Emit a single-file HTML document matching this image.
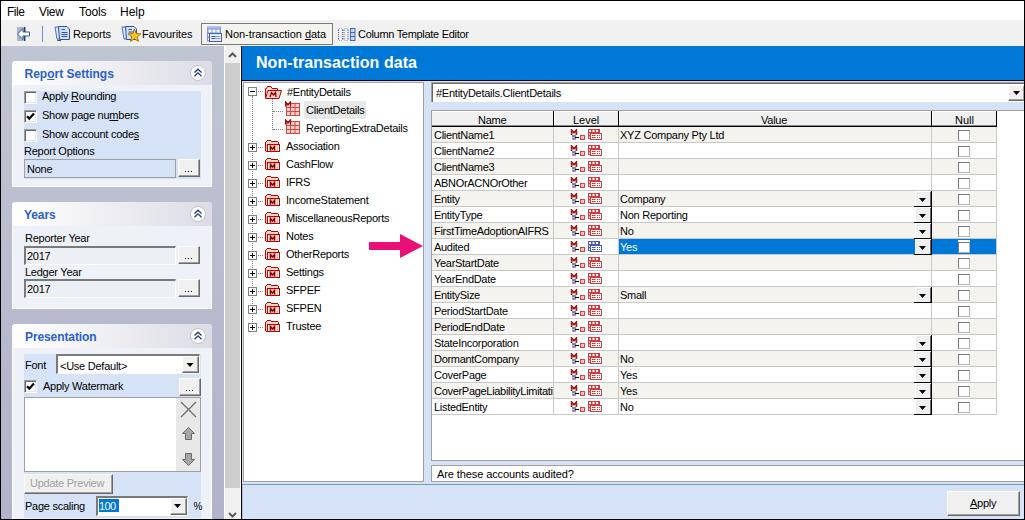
<!DOCTYPE html>
<html><head><meta charset="utf-8">
<style>
*{box-sizing:border-box}
html,body{margin:0;padding:0}
body{width:1025px;height:520px;overflow:hidden;position:relative;background:#000;font-family:"Liberation Sans",sans-serif;font-size:11px;color:#000}
.a{position:absolute}
.t{position:absolute;white-space:pre;line-height:1;letter-spacing:-0.25px}
.u{text-decoration:underline}
.cb{width:13px;height:13px;background:#fff;border-top:1px solid #a0a0a0;border-left:1px solid #a0a0a0;border-right:1px solid #fff;border-bottom:1px solid #fff;box-shadow:inset 1px 1px 0 #696969,inset -1px -1px 0 #e3e3e3}
.btn{background:#f0f0f0;border-top:1px solid #fff;border-left:1px solid #fff;border-right:1px solid #696969;border-bottom:1px solid #696969;box-shadow:inset -1px -1px 0 #a0a0a0}
.dots{position:absolute;width:7px;height:1px;background:linear-gradient(90deg,#000 1px,transparent 1px) 0 0/3px 1px}
.inset{border-top:2px solid #7a7a7a;border-left:2px solid #7a7a7a;border-right:1px solid #fff;border-bottom:1px solid #fff}
</style></head><body>
<!-- window content -->
<div class="a" style="left:1px;top:1px;width:1023px;height:518px;background:#fff"></div>

<!-- MENU -->
<div class="t" style="left:7px;top:6px;font-size:12px;letter-spacing:-0.5px">File</div>
<div class="t" style="left:39px;top:6px;font-size:12px;letter-spacing:-0.3px">View</div>
<div class="t" style="left:79px;top:6px;font-size:12px;letter-spacing:-0.1px">Tools</div>
<div class="t" style="left:120px;top:6px;font-size:12px;letter-spacing:0">Help</div>

<!-- TOOLBAR -->
<div id="toolbar" class="a" style="left:1px;top:20px;width:1023px;height:26px;background:#f0f0f0"></div>


<!-- toolbar items -->
<svg class="a" style="left:16px;top:26px" width="16" height="16">
<rect x="1" y="1" width="7" height="14" fill="#a4b8d4"/>
<rect x="8" y="1" width="1.4" height="14" fill="#1d3a66"/>
<path d="M1.5 8 L7 2.6 V6 H13.5 V10 H7 V13.4 Z" fill="#fff" stroke="#2a4a7a" stroke-width="0.9"/>
</svg>
<div class="a" style="left:42px;top:26px;width:1px;height:16px;background:#6c8fd0"></div>
<svg class="a" style="left:54px;top:25px" width="17" height="17">
<path d="M1 2 H5 L6 14 H3 Z" fill="#d8e8fa" stroke="#4a6fc0" stroke-width="1"/>
<path d="M4.5 1.5 H13 L15.5 4 V14.5 H5.5 Z" fill="#cfe3fa" stroke="#34509a" stroke-width="1"/>
<path d="M7.5 4.5 H11 M7.5 7.5 H13.5 M7.5 9.5 H13.5 M7.5 11.5 H13.5" stroke="#3a4f9a" stroke-width="1"/>
<path d="M3.5 14.5 V15.5 H7" stroke="#34509a" fill="none"/>
</svg>
<div class="t" style="left:73px;top:29px;letter-spacing:-0.1px">Reports</div>
<svg class="a" style="left:121px;top:25px" width="20" height="18">
<path d="M1 2 H5 L6 14 H3 Z" fill="#d8e8fa" stroke="#4a6fc0" stroke-width="1"/>
<path d="M4.5 1.5 H13 L15.5 4 V14.5 H5.5 Z" fill="#cfe3fa" stroke="#34509a" stroke-width="1"/>
<path d="M7.5 4.5 H11 M7.5 7 H13" stroke="#3a4f9a" stroke-width="1"/>
<path d="M13.50 4.10 L15.20 8.55 L19.97 8.80 L16.26 11.80 L17.50 16.40 L13.50 13.80 L9.50 16.40 L10.74 11.80 L7.03 8.80 L11.80 8.55 Z" fill="#f7c623" stroke="#a06a0a" stroke-width="0.9"/>
</svg>
<div class="t" style="left:142px;top:29px;letter-spacing:-0.1px">Favourites</div>
<div class="a" style="left:201px;top:23px;width:132px;height:22px;background:#f5f3ee;border:1px solid #7a7a7a"></div>
<svg class="a" style="left:207px;top:26px" width="16" height="17">
<rect x="0" y="0.5" width="14" height="15" fill="#7f97dc"/>
<rect x="0.5" y="1" width="13" height="1.5" fill="#a9b9ea"/>
<rect x="1.5" y="3.5" width="3" height="3" fill="#f4f6ff"/><rect x="5.5" y="3.5" width="3" height="3" fill="#f4f6ff"/><rect x="9.5" y="3.5" width="3" height="3" fill="#f4f6ff"/>
<rect x="1" y="8" width="1.5" height="2.5" fill="#f4f6ff"/><rect x="1" y="12" width="1.5" height="2" fill="#f4f6ff"/>
<rect x="2.5" y="7.5" width="12" height="8" fill="#d9effc" stroke="#5a58a8" stroke-width="1"/>
<path d="M4.5 10.5 H8.5 M4.5 12.5 H8.5" stroke="#4a4a96" stroke-width="1"/>
<rect x="9.5" y="10" width="1" height="1" fill="#4a4a96"/><rect x="11.5" y="10" width="1" height="1" fill="#4a4a96"/>
<rect x="9.5" y="12" width="1" height="1" fill="#4a4a96"/><rect x="11.5" y="12" width="1" height="1" fill="#4a4a96"/>
</svg>
<div class="t" style="left:225px;top:29px;letter-spacing:-0.05px">Non-transaction <span class="u">d</span>ata</div>
<svg class="a" style="left:337px;top:27px" width="19" height="15"><rect x="1" y="3" width="1" height="1" fill="#5060a0"/><rect x="5" y="3" width="1" height="1" fill="#5060a0"/><rect x="1" y="5" width="1" height="1" fill="#5060a0"/><rect x="5" y="5" width="1" height="1" fill="#5060a0"/><rect x="1" y="7" width="1" height="1" fill="#5060a0"/><rect x="5" y="7" width="1" height="1" fill="#5060a0"/><rect x="1" y="9" width="1" height="1" fill="#5060a0"/><rect x="5" y="9" width="1" height="1" fill="#5060a0"/><rect x="1" y="11" width="1" height="1" fill="#5060a0"/><rect x="5" y="11" width="1" height="1" fill="#5060a0"/><path d="M1.5 2.5 L2.5 1.5 M5.5 2.5 L4.5 1.5 M1.5 12.5 L2.5 13.5 M5.5 12.5 L4.5 13.5" stroke="#5060a0" stroke-width="1"/><rect x="6.5" y="3" width="1" height="1" fill="#5060a0"/><rect x="10.5" y="3" width="1" height="1" fill="#5060a0"/><rect x="6.5" y="5" width="1" height="1" fill="#5060a0"/><rect x="10.5" y="5" width="1" height="1" fill="#5060a0"/><rect x="6.5" y="7" width="1" height="1" fill="#5060a0"/><rect x="10.5" y="7" width="1" height="1" fill="#5060a0"/><rect x="6.5" y="9" width="1" height="1" fill="#5060a0"/><rect x="10.5" y="9" width="1" height="1" fill="#5060a0"/><rect x="6.5" y="11" width="1" height="1" fill="#5060a0"/><rect x="10.5" y="11" width="1" height="1" fill="#5060a0"/><path d="M7.0 2.5 L8.0 1.5 M11.0 2.5 L10.0 1.5 M7.0 12.5 L8.0 13.5 M11.0 12.5 L10.0 13.5" stroke="#5060a0" stroke-width="1"/><rect x="13" y="1" width="5.5" height="13" fill="#4466c0"/><rect x="14" y="2" width="3.5" height="3" fill="#c8d8f6"/><rect x="14" y="6" width="3.5" height="3" fill="#c8d8f6"/><rect x="14" y="10" width="3.5" height="3" fill="#c8d8f6"/></svg>
<div class="t" style="left:358px;top:29px;letter-spacing:-0.3px">Column Template Editor</div>

<!-- LEFT PANEL -->
<div id="leftbg" class="a" style="left:1px;top:46px;width:223px;height:473px;background:linear-gradient(#c0c5d3,#b1b3ca)"></div>


<!-- PANEL: Report Settings -->
<div class="a" style="left:12px;top:61px;width:200px;height:126px;background:#eef1f7;border-left:1px solid #fff;border-right:1px solid #fff;border-bottom:1px solid #fff;border-radius:4px 4px 0 0"></div>
<div class="a" style="left:12px;top:61px;width:200px;height:24px;background:linear-gradient(90deg,#fff 0%,#f3f3f6 35%,#dcdce6 100%);border-radius:4px 4px 0 0"></div>
<div class="t" style="left:24.5px;top:68px;font-size:12px;font-weight:bold;color:#2b5fcb;letter-spacing:0">Rep<span class="u">o</span>rt Settings</div>
<div class="a" style="left:190px;top:64.5px;width:16px;height:16px;border-radius:50%;background:radial-gradient(circle at 50% 40%,#fff 60%,#f2f2f6);border:1px solid #c2c4d0"></div>
<svg class="a" style="left:190px;top:64.5px" width="16" height="16"><path d="M4.5 7.5 L8 4.2 L11.5 7.5 M4.5 11.2 L8 7.9 L11.5 11.2" stroke="#1f3a78" stroke-width="1.3" fill="none"/></svg>
<div class="a" style="left:24px;top:91px;width:177px;height:88px;background:#d6e3f6"></div>
<div class="a cb" style="left:24px;top:91px"></div>
<div class="t" style="left:42px;top:91px">Apply <span class="u">R</span>ounding</div>
<div class="a cb" style="left:24px;top:110px"></div><svg class="a" style="left:24px;top:110px" width="13" height="13"><path d="M3 6.2 L5.3 8.6 L10 3.6" stroke="#000" stroke-width="2.2" fill="none"/></svg>
<div class="t" style="left:42px;top:110px">Show page nu<span class="u">m</span>bers</div>
<div class="a cb" style="left:24px;top:129px"></div>
<div class="t" style="left:42px;top:129px">Show account code<span class="u">s</span></div>
<div class="t" style="left:24px;top:146px">Report Options</div>
<div class="a" style="left:24px;top:159px;width:152px;height:19px;border:1px solid #a0a0a0;background:#d6e3f6"></div>
<div class="t" style="left:27px;top:164px">None</div>
<div class="a btn" style="left:178px;top:159px;width:22px;height:18px"></div>
<div class="dots" style="left:185px;top:171px"></div>

<!-- PANEL: Years -->
<div class="a" style="left:12px;top:202px;width:200px;height:107px;background:#eef1f7;border-left:1px solid #fff;border-right:1px solid #fff;border-bottom:1px solid #fff;border-radius:4px 4px 0 0"></div>
<div class="a" style="left:12px;top:202px;width:200px;height:24px;background:linear-gradient(90deg,#fff 0%,#f3f3f6 35%,#dcdce6 100%);border-radius:4px 4px 0 0"></div>
<div class="t" style="left:24px;top:209px;font-size:12px;font-weight:bold;color:#2b5fcb;letter-spacing:-0.1px">Years</div>
<div class="a" style="left:190px;top:205.5px;width:16px;height:16px;border-radius:50%;background:radial-gradient(circle at 50% 40%,#fff 60%,#f2f2f6);border:1px solid #c2c4d0"></div>
<svg class="a" style="left:190px;top:205.5px" width="16" height="16"><path d="M4.5 7.5 L8 4.2 L11.5 7.5 M4.5 11.2 L8 7.9 L11.5 11.2" stroke="#1f3a78" stroke-width="1.3" fill="none"/></svg>
<div class="t" style="left:25px;top:233px">Reporter Year</div>
<div class="a inset" style="left:24px;top:246px;width:152px;height:19px;background:#eceff4"></div>
<div class="t" style="left:27px;top:251px">2017</div>
<div class="a btn" style="left:178px;top:246px;width:22px;height:18px"></div>
<div class="dots" style="left:185px;top:258px"></div>
<div class="t" style="left:25px;top:267px">Ledger Year</div>
<div class="a inset" style="left:24px;top:279px;width:152px;height:19px;background:#eceff4"></div>
<div class="t" style="left:27px;top:284px">2017</div>
<div class="a btn" style="left:178px;top:279px;width:22px;height:18px"></div>
<div class="dots" style="left:185px;top:291px"></div>

<!-- PANEL: Presentation -->
<div class="a" style="left:12px;top:324px;width:200px;height:195px;background:#eef1f7;border-left:1px solid #fff;border-right:1px solid #fff;border-radius:4px 4px 0 0"></div>
<div class="a" style="left:12px;top:324px;width:200px;height:24px;background:linear-gradient(90deg,#fff 0%,#f3f3f6 35%,#dcdce6 100%);border-radius:4px 4px 0 0"></div>
<div class="t" style="left:25px;top:331px;font-size:12px;font-weight:bold;color:#2b5fcb;letter-spacing:-0.1px">Presentation</div>
<div class="a" style="left:190px;top:327.5px;width:16px;height:16px;border-radius:50%;background:radial-gradient(circle at 50% 40%,#fff 60%,#f2f2f6);border:1px solid #c2c4d0"></div>
<svg class="a" style="left:190px;top:327.5px" width="16" height="16"><path d="M4.5 7.5 L8 4.2 L11.5 7.5 M4.5 11.2 L8 7.9 L11.5 11.2" stroke="#1f3a78" stroke-width="1.3" fill="none"/></svg>
<div class="a" style="left:24px;top:354px;width:177px;height:164px;background:#d6e3f6"></div>
<div class="t" style="left:25px;top:360px">Font</div>
<div class="a inset" style="left:56px;top:354px;width:144px;height:20px;background:#fff"></div>
<div class="t" style="left:60px;top:361px">&lt;Use Default&gt;</div>
<div class="a btn" style="left:182px;top:356px;width:17px;height:17px"></div>
<svg class="a" style="left:182px;top:357px" width="16" height="16"><path d="M4.5 6 H11.5 L8 10 Z" fill="#000"/></svg>
<div class="a cb" style="left:24px;top:380px"></div><svg class="a" style="left:24px;top:380px" width="13" height="13"><path d="M3 6.2 L5.3 8.6 L10 3.6" stroke="#000" stroke-width="2.2" fill="none"/></svg>
<div class="t" style="left:43px;top:381px">Apply Watermark</div>
<div class="a btn" style="left:179px;top:378px;width:22px;height:18px"></div>
<div class="dots" style="left:186px;top:390px"></div>
<div class="a" style="left:24px;top:397px;width:177px;height:75px;background:#fff;border-top:1px solid #a0a0a0;border-left:1px solid #a0a0a0;border-bottom:1px solid #a0a0a0;border-right:1px solid #a0a0a0"></div>
<div class="a" style="left:176px;top:398px;width:24px;height:73px;background:#e8e8e8"></div>
<svg class="a" style="left:176px;top:398px" width="24" height="73">
<path d="M5 4 L20 19 M20 4 L5 19" stroke="#6e6e6e" stroke-width="1.3" fill="none"/>
<path d="M12.5 29.5 L18.5 35.5 H15.5 V41.5 H9.5 V35.5 H6.5 Z" fill="#a8a8a8" stroke="#6a6a6a" stroke-width="1"/>
<path d="M12.5 67.5 L18.5 61.5 H15.5 V55.5 H9.5 V61.5 H6.5 Z" fill="#a8a8a8" stroke="#6a6a6a" stroke-width="1"/>
</svg>
<div class="a btn" style="left:24px;top:474px;width:89px;height:20px"></div>
<div class="t" style="left:30px;top:478px;color:#a0a0a0">Update Preview</div>
<div class="t" style="left:25px;top:501px">Page scaling</div>
<div class="a inset" style="left:96px;top:496px;width:92px;height:20px;background:#fff"></div>
<div class="a" style="left:99px;top:499px;width:20px;height:13px;background:#0078d7"></div>
<div class="t" style="left:99px;top:501px;color:#fff;letter-spacing:-0.6px">100</div>
<div class="a btn" style="left:170px;top:498px;width:17px;height:17px"></div>
<svg class="a" style="left:170px;top:498px" width="16" height="16"><path d="M4 6 H11 L7.5 10 Z" fill="#000"/></svg>
<div class="t" style="left:193.5px;top:502px;font-size:10px;letter-spacing:-0.5px">%</div>

<!-- SCROLLBAR -->
<div class="a" style="left:224px;top:46px;width:17px;height:473px;background:#f0f0f0"></div>
<div class="a" style="left:225px;top:63px;width:15px;height:425px;background:#cdcdcd"></div>
<div class="a" style="left:224px;top:46px;width:1px;height:473px;background:#fff"></div><div class="a" style="left:240px;top:46px;width:1px;height:473px;background:#fff"></div>
<div class="a" style="left:241px;top:46px;width:1px;height:473px;background:#000"></div>


<svg class="a" style="left:225px;top:46px" width="15" height="17"><path d="M4 11 L7.5 7.5 L11 11" stroke="#5a5a5a" stroke-width="2" fill="none"/></svg>
<svg class="a" style="left:225px;top:504px" width="15" height="15"><path d="M4 9 L7.5 12.5 L11 9" stroke="#5a5a5a" stroke-width="2" fill="none"/></svg>

<!-- RIGHT AREA -->
<div id="right" class="a" style="left:242px;top:46px;width:782px;height:473px;background:#d6e3f6"></div>
<div id="hdr" class="a" style="left:242px;top:46px;width:782px;height:34px;background:#0078d7"></div>
<div class="a" style="left:242px;top:80px;width:782px;height:1px;background:#000"></div>
<div class="t" style="left:256px;top:55px;font-size:16px;font-weight:bold;color:#fff;letter-spacing:0.05px">Non-transaction data</div>

<!-- tree box -->
<div id="tree" class="a" style="left:243px;top:82px;width:181px;height:400px;background:#fff;border:1px solid #a0a0a0"></div>

<!-- TREE -->
<div class="a" style="left:252px;top:96px;width:1px;height:228px;border-left:1px dotted #808080"></div>
<div class="a" style="left:272px;top:99px;width:1px;height:31px;border-left:1px dotted #808080"></div>
<div class="a" style="left:273px;top:111px;width:10px;height:1px;border-top:1px dotted #808080"></div>
<div class="a" style="left:273px;top:129px;width:10px;height:1px;border-top:1px dotted #808080"></div>
<div class="a" style="left:248px;top:87px;width:9px;height:9px;border:1px solid #808080;background:#fff"></div>
<div class="a" style="left:250px;top:91px;width:5px;height:1px;background:#000"></div>
<div class="a" style="left:258px;top:91px;width:5px;height:1px;border-top:1px dotted #808080"></div>
<svg class="a" style="left:265px;top:86px" width="17" height="13"><path d="M0.5 11.5 V2.5 H1.5 L2.5 0.5 H6 L7 2.5 H12.5 V4.5" fill="#fcdcd4" stroke="#c40000" stroke-width="1"/><path d="M0.5 12.5 L3 4.5 H16.5 L14 12.5 Z" fill="#f7cfc6" stroke="#c40000" stroke-width="1"/><path d="M5 11 L6.5 6.5 L8.5 9 L10.5 6.5 L11 11" stroke="#8a0000" fill="none" stroke-width="1.3"/></svg>
<div class="t" style="left:287px;top:87px">#EntityDetails</div>
<div class="a" style="left:304px;top:101px;width:62px;height:18px;background:#e8e8e8"></div>
<svg class="a" style="left:285px;top:101px" width="15" height="15"><rect x="1.5" y="2.5" width="13" height="12" fill="#f7d0c8" stroke="#d04848" stroke-width="1"/><path d="M1.5 6.5 H14.5 M1.5 10.5 H14.5 M5.5 2.5 V14.5 M10 2.5 V14.5" stroke="#d04848" stroke-width="1"/><path d="M0.5 5.5 V0.8 L3 4 L5.5 0.8 V5.5" stroke="#9a1010" stroke-width="1.3" fill="none"/></svg>
<div class="t" style="left:306px;top:105px">ClientDetails</div>
<svg class="a" style="left:285px;top:119px" width="15" height="15"><rect x="1.5" y="2.5" width="13" height="12" fill="#f7d0c8" stroke="#d04848" stroke-width="1"/><path d="M1.5 6.5 H14.5 M1.5 10.5 H14.5 M5.5 2.5 V14.5 M10 2.5 V14.5" stroke="#d04848" stroke-width="1"/><path d="M0.5 5.5 V0.8 L3 4 L5.5 0.8 V5.5" stroke="#9a1010" stroke-width="1.3" fill="none"/></svg>
<div class="t" style="left:306px;top:123px">ReportingExtraDetails</div>
<div class="a" style="left:248px;top:143px;width:9px;height:9px;border:1px solid #808080;background:#fff"></div>
<div class="a" style="left:250px;top:147px;width:5px;height:1px;background:#000"></div>
<div class="a" style="left:252px;top:145px;width:1px;height:5px;background:#000"></div>
<div class="a" style="left:258px;top:147px;width:5px;height:1px;border-top:1px dotted #808080"></div>
<svg class="a" style="left:265px;top:140px" width="15" height="12" shape-rendering="crispEdges"><rect x="1" y="2" width="12" height="2" fill="#fbd3c4"/><rect x="2" y="1" width="4" height="1" fill="#fbe3da"/><rect x="1" y="4" width="1" height="7" fill="#fbd3c4"/><rect x="2" y="0" width="4" height="1" fill="#c00000"/><rect x="1" y="1" width="1" height="1" fill="#c00000"/><rect x="6" y="1" width="7" height="1" fill="#c00000"/><rect x="13" y="2" width="1" height="2" fill="#c00000"/><rect x="0" y="2" width="1" height="9" fill="#c00000"/><rect x="3" y="5" width="11" height="6" fill="#f3b8ac"/><rect x="3" y="5" width="1" height="6" fill="#fff"/><rect x="11" y="5" width="1" height="6" fill="#fde8e2"/><rect x="13" y="5" width="1" height="6" fill="#fff"/><rect x="1" y="11" width="14" height="1" fill="#c00000"/><rect x="2" y="4" width="13" height="1" fill="#c00000"/><rect x="2" y="4" width="1" height="8" fill="#c00000"/><rect x="14" y="4" width="1" height="8" fill="#c00000"/><path d="M5.5 10.5 V6.5 L7.5 9 L9.5 6.5 V10.5" stroke="#7a0000" stroke-width="1.3" fill="none" shape-rendering="auto"/></svg>
<div class="t" style="left:286px;top:141px">Association</div>
<div class="a" style="left:248px;top:161px;width:9px;height:9px;border:1px solid #808080;background:#fff"></div>
<div class="a" style="left:250px;top:165px;width:5px;height:1px;background:#000"></div>
<div class="a" style="left:252px;top:163px;width:1px;height:5px;background:#000"></div>
<div class="a" style="left:258px;top:165px;width:5px;height:1px;border-top:1px dotted #808080"></div>
<svg class="a" style="left:265px;top:158px" width="15" height="12" shape-rendering="crispEdges"><rect x="1" y="2" width="12" height="2" fill="#fbd3c4"/><rect x="2" y="1" width="4" height="1" fill="#fbe3da"/><rect x="1" y="4" width="1" height="7" fill="#fbd3c4"/><rect x="2" y="0" width="4" height="1" fill="#c00000"/><rect x="1" y="1" width="1" height="1" fill="#c00000"/><rect x="6" y="1" width="7" height="1" fill="#c00000"/><rect x="13" y="2" width="1" height="2" fill="#c00000"/><rect x="0" y="2" width="1" height="9" fill="#c00000"/><rect x="3" y="5" width="11" height="6" fill="#f3b8ac"/><rect x="3" y="5" width="1" height="6" fill="#fff"/><rect x="11" y="5" width="1" height="6" fill="#fde8e2"/><rect x="13" y="5" width="1" height="6" fill="#fff"/><rect x="1" y="11" width="14" height="1" fill="#c00000"/><rect x="2" y="4" width="13" height="1" fill="#c00000"/><rect x="2" y="4" width="1" height="8" fill="#c00000"/><rect x="14" y="4" width="1" height="8" fill="#c00000"/><path d="M5.5 10.5 V6.5 L7.5 9 L9.5 6.5 V10.5" stroke="#7a0000" stroke-width="1.3" fill="none" shape-rendering="auto"/></svg>
<div class="t" style="left:286px;top:159px">CashFlow</div>
<div class="a" style="left:248px;top:179px;width:9px;height:9px;border:1px solid #808080;background:#fff"></div>
<div class="a" style="left:250px;top:183px;width:5px;height:1px;background:#000"></div>
<div class="a" style="left:252px;top:181px;width:1px;height:5px;background:#000"></div>
<div class="a" style="left:258px;top:183px;width:5px;height:1px;border-top:1px dotted #808080"></div>
<svg class="a" style="left:265px;top:176px" width="15" height="12" shape-rendering="crispEdges"><rect x="1" y="2" width="12" height="2" fill="#fbd3c4"/><rect x="2" y="1" width="4" height="1" fill="#fbe3da"/><rect x="1" y="4" width="1" height="7" fill="#fbd3c4"/><rect x="2" y="0" width="4" height="1" fill="#c00000"/><rect x="1" y="1" width="1" height="1" fill="#c00000"/><rect x="6" y="1" width="7" height="1" fill="#c00000"/><rect x="13" y="2" width="1" height="2" fill="#c00000"/><rect x="0" y="2" width="1" height="9" fill="#c00000"/><rect x="3" y="5" width="11" height="6" fill="#f3b8ac"/><rect x="3" y="5" width="1" height="6" fill="#fff"/><rect x="11" y="5" width="1" height="6" fill="#fde8e2"/><rect x="13" y="5" width="1" height="6" fill="#fff"/><rect x="1" y="11" width="14" height="1" fill="#c00000"/><rect x="2" y="4" width="13" height="1" fill="#c00000"/><rect x="2" y="4" width="1" height="8" fill="#c00000"/><rect x="14" y="4" width="1" height="8" fill="#c00000"/><path d="M5.5 10.5 V6.5 L7.5 9 L9.5 6.5 V10.5" stroke="#7a0000" stroke-width="1.3" fill="none" shape-rendering="auto"/></svg>
<div class="t" style="left:286px;top:177px">IFRS</div>
<div class="a" style="left:248px;top:197px;width:9px;height:9px;border:1px solid #808080;background:#fff"></div>
<div class="a" style="left:250px;top:201px;width:5px;height:1px;background:#000"></div>
<div class="a" style="left:252px;top:199px;width:1px;height:5px;background:#000"></div>
<div class="a" style="left:258px;top:201px;width:5px;height:1px;border-top:1px dotted #808080"></div>
<svg class="a" style="left:265px;top:194px" width="15" height="12" shape-rendering="crispEdges"><rect x="1" y="2" width="12" height="2" fill="#fbd3c4"/><rect x="2" y="1" width="4" height="1" fill="#fbe3da"/><rect x="1" y="4" width="1" height="7" fill="#fbd3c4"/><rect x="2" y="0" width="4" height="1" fill="#c00000"/><rect x="1" y="1" width="1" height="1" fill="#c00000"/><rect x="6" y="1" width="7" height="1" fill="#c00000"/><rect x="13" y="2" width="1" height="2" fill="#c00000"/><rect x="0" y="2" width="1" height="9" fill="#c00000"/><rect x="3" y="5" width="11" height="6" fill="#f3b8ac"/><rect x="3" y="5" width="1" height="6" fill="#fff"/><rect x="11" y="5" width="1" height="6" fill="#fde8e2"/><rect x="13" y="5" width="1" height="6" fill="#fff"/><rect x="1" y="11" width="14" height="1" fill="#c00000"/><rect x="2" y="4" width="13" height="1" fill="#c00000"/><rect x="2" y="4" width="1" height="8" fill="#c00000"/><rect x="14" y="4" width="1" height="8" fill="#c00000"/><path d="M5.5 10.5 V6.5 L7.5 9 L9.5 6.5 V10.5" stroke="#7a0000" stroke-width="1.3" fill="none" shape-rendering="auto"/></svg>
<div class="t" style="left:286px;top:195px">IncomeStatement</div>
<div class="a" style="left:248px;top:215px;width:9px;height:9px;border:1px solid #808080;background:#fff"></div>
<div class="a" style="left:250px;top:219px;width:5px;height:1px;background:#000"></div>
<div class="a" style="left:252px;top:217px;width:1px;height:5px;background:#000"></div>
<div class="a" style="left:258px;top:219px;width:5px;height:1px;border-top:1px dotted #808080"></div>
<svg class="a" style="left:265px;top:212px" width="15" height="12" shape-rendering="crispEdges"><rect x="1" y="2" width="12" height="2" fill="#fbd3c4"/><rect x="2" y="1" width="4" height="1" fill="#fbe3da"/><rect x="1" y="4" width="1" height="7" fill="#fbd3c4"/><rect x="2" y="0" width="4" height="1" fill="#c00000"/><rect x="1" y="1" width="1" height="1" fill="#c00000"/><rect x="6" y="1" width="7" height="1" fill="#c00000"/><rect x="13" y="2" width="1" height="2" fill="#c00000"/><rect x="0" y="2" width="1" height="9" fill="#c00000"/><rect x="3" y="5" width="11" height="6" fill="#f3b8ac"/><rect x="3" y="5" width="1" height="6" fill="#fff"/><rect x="11" y="5" width="1" height="6" fill="#fde8e2"/><rect x="13" y="5" width="1" height="6" fill="#fff"/><rect x="1" y="11" width="14" height="1" fill="#c00000"/><rect x="2" y="4" width="13" height="1" fill="#c00000"/><rect x="2" y="4" width="1" height="8" fill="#c00000"/><rect x="14" y="4" width="1" height="8" fill="#c00000"/><path d="M5.5 10.5 V6.5 L7.5 9 L9.5 6.5 V10.5" stroke="#7a0000" stroke-width="1.3" fill="none" shape-rendering="auto"/></svg>
<div class="t" style="left:286px;top:213px">MiscellaneousReports</div>
<div class="a" style="left:248px;top:233px;width:9px;height:9px;border:1px solid #808080;background:#fff"></div>
<div class="a" style="left:250px;top:237px;width:5px;height:1px;background:#000"></div>
<div class="a" style="left:252px;top:235px;width:1px;height:5px;background:#000"></div>
<div class="a" style="left:258px;top:237px;width:5px;height:1px;border-top:1px dotted #808080"></div>
<svg class="a" style="left:265px;top:230px" width="15" height="12" shape-rendering="crispEdges"><rect x="1" y="2" width="12" height="2" fill="#fbd3c4"/><rect x="2" y="1" width="4" height="1" fill="#fbe3da"/><rect x="1" y="4" width="1" height="7" fill="#fbd3c4"/><rect x="2" y="0" width="4" height="1" fill="#c00000"/><rect x="1" y="1" width="1" height="1" fill="#c00000"/><rect x="6" y="1" width="7" height="1" fill="#c00000"/><rect x="13" y="2" width="1" height="2" fill="#c00000"/><rect x="0" y="2" width="1" height="9" fill="#c00000"/><rect x="3" y="5" width="11" height="6" fill="#f3b8ac"/><rect x="3" y="5" width="1" height="6" fill="#fff"/><rect x="11" y="5" width="1" height="6" fill="#fde8e2"/><rect x="13" y="5" width="1" height="6" fill="#fff"/><rect x="1" y="11" width="14" height="1" fill="#c00000"/><rect x="2" y="4" width="13" height="1" fill="#c00000"/><rect x="2" y="4" width="1" height="8" fill="#c00000"/><rect x="14" y="4" width="1" height="8" fill="#c00000"/><path d="M5.5 10.5 V6.5 L7.5 9 L9.5 6.5 V10.5" stroke="#7a0000" stroke-width="1.3" fill="none" shape-rendering="auto"/></svg>
<div class="t" style="left:286px;top:231px">Notes</div>
<div class="a" style="left:248px;top:251px;width:9px;height:9px;border:1px solid #808080;background:#fff"></div>
<div class="a" style="left:250px;top:255px;width:5px;height:1px;background:#000"></div>
<div class="a" style="left:252px;top:253px;width:1px;height:5px;background:#000"></div>
<div class="a" style="left:258px;top:255px;width:5px;height:1px;border-top:1px dotted #808080"></div>
<svg class="a" style="left:265px;top:248px" width="15" height="12" shape-rendering="crispEdges"><rect x="1" y="2" width="12" height="2" fill="#fbd3c4"/><rect x="2" y="1" width="4" height="1" fill="#fbe3da"/><rect x="1" y="4" width="1" height="7" fill="#fbd3c4"/><rect x="2" y="0" width="4" height="1" fill="#c00000"/><rect x="1" y="1" width="1" height="1" fill="#c00000"/><rect x="6" y="1" width="7" height="1" fill="#c00000"/><rect x="13" y="2" width="1" height="2" fill="#c00000"/><rect x="0" y="2" width="1" height="9" fill="#c00000"/><rect x="3" y="5" width="11" height="6" fill="#f3b8ac"/><rect x="3" y="5" width="1" height="6" fill="#fff"/><rect x="11" y="5" width="1" height="6" fill="#fde8e2"/><rect x="13" y="5" width="1" height="6" fill="#fff"/><rect x="1" y="11" width="14" height="1" fill="#c00000"/><rect x="2" y="4" width="13" height="1" fill="#c00000"/><rect x="2" y="4" width="1" height="8" fill="#c00000"/><rect x="14" y="4" width="1" height="8" fill="#c00000"/><path d="M5.5 10.5 V6.5 L7.5 9 L9.5 6.5 V10.5" stroke="#7a0000" stroke-width="1.3" fill="none" shape-rendering="auto"/></svg>
<div class="t" style="left:286px;top:249px">OtherReports</div>
<div class="a" style="left:248px;top:269px;width:9px;height:9px;border:1px solid #808080;background:#fff"></div>
<div class="a" style="left:250px;top:273px;width:5px;height:1px;background:#000"></div>
<div class="a" style="left:252px;top:271px;width:1px;height:5px;background:#000"></div>
<div class="a" style="left:258px;top:273px;width:5px;height:1px;border-top:1px dotted #808080"></div>
<svg class="a" style="left:265px;top:266px" width="15" height="12" shape-rendering="crispEdges"><rect x="1" y="2" width="12" height="2" fill="#fbd3c4"/><rect x="2" y="1" width="4" height="1" fill="#fbe3da"/><rect x="1" y="4" width="1" height="7" fill="#fbd3c4"/><rect x="2" y="0" width="4" height="1" fill="#c00000"/><rect x="1" y="1" width="1" height="1" fill="#c00000"/><rect x="6" y="1" width="7" height="1" fill="#c00000"/><rect x="13" y="2" width="1" height="2" fill="#c00000"/><rect x="0" y="2" width="1" height="9" fill="#c00000"/><rect x="3" y="5" width="11" height="6" fill="#f3b8ac"/><rect x="3" y="5" width="1" height="6" fill="#fff"/><rect x="11" y="5" width="1" height="6" fill="#fde8e2"/><rect x="13" y="5" width="1" height="6" fill="#fff"/><rect x="1" y="11" width="14" height="1" fill="#c00000"/><rect x="2" y="4" width="13" height="1" fill="#c00000"/><rect x="2" y="4" width="1" height="8" fill="#c00000"/><rect x="14" y="4" width="1" height="8" fill="#c00000"/><path d="M5.5 10.5 V6.5 L7.5 9 L9.5 6.5 V10.5" stroke="#7a0000" stroke-width="1.3" fill="none" shape-rendering="auto"/></svg>
<div class="t" style="left:286px;top:267px">Settings</div>
<div class="a" style="left:248px;top:287px;width:9px;height:9px;border:1px solid #808080;background:#fff"></div>
<div class="a" style="left:250px;top:291px;width:5px;height:1px;background:#000"></div>
<div class="a" style="left:252px;top:289px;width:1px;height:5px;background:#000"></div>
<div class="a" style="left:258px;top:291px;width:5px;height:1px;border-top:1px dotted #808080"></div>
<svg class="a" style="left:265px;top:284px" width="15" height="12" shape-rendering="crispEdges"><rect x="1" y="2" width="12" height="2" fill="#fbd3c4"/><rect x="2" y="1" width="4" height="1" fill="#fbe3da"/><rect x="1" y="4" width="1" height="7" fill="#fbd3c4"/><rect x="2" y="0" width="4" height="1" fill="#c00000"/><rect x="1" y="1" width="1" height="1" fill="#c00000"/><rect x="6" y="1" width="7" height="1" fill="#c00000"/><rect x="13" y="2" width="1" height="2" fill="#c00000"/><rect x="0" y="2" width="1" height="9" fill="#c00000"/><rect x="3" y="5" width="11" height="6" fill="#f3b8ac"/><rect x="3" y="5" width="1" height="6" fill="#fff"/><rect x="11" y="5" width="1" height="6" fill="#fde8e2"/><rect x="13" y="5" width="1" height="6" fill="#fff"/><rect x="1" y="11" width="14" height="1" fill="#c00000"/><rect x="2" y="4" width="13" height="1" fill="#c00000"/><rect x="2" y="4" width="1" height="8" fill="#c00000"/><rect x="14" y="4" width="1" height="8" fill="#c00000"/><path d="M5.5 10.5 V6.5 L7.5 9 L9.5 6.5 V10.5" stroke="#7a0000" stroke-width="1.3" fill="none" shape-rendering="auto"/></svg>
<div class="t" style="left:286px;top:285px">SFPEF</div>
<div class="a" style="left:248px;top:305px;width:9px;height:9px;border:1px solid #808080;background:#fff"></div>
<div class="a" style="left:250px;top:309px;width:5px;height:1px;background:#000"></div>
<div class="a" style="left:252px;top:307px;width:1px;height:5px;background:#000"></div>
<div class="a" style="left:258px;top:309px;width:5px;height:1px;border-top:1px dotted #808080"></div>
<svg class="a" style="left:265px;top:302px" width="15" height="12" shape-rendering="crispEdges"><rect x="1" y="2" width="12" height="2" fill="#fbd3c4"/><rect x="2" y="1" width="4" height="1" fill="#fbe3da"/><rect x="1" y="4" width="1" height="7" fill="#fbd3c4"/><rect x="2" y="0" width="4" height="1" fill="#c00000"/><rect x="1" y="1" width="1" height="1" fill="#c00000"/><rect x="6" y="1" width="7" height="1" fill="#c00000"/><rect x="13" y="2" width="1" height="2" fill="#c00000"/><rect x="0" y="2" width="1" height="9" fill="#c00000"/><rect x="3" y="5" width="11" height="6" fill="#f3b8ac"/><rect x="3" y="5" width="1" height="6" fill="#fff"/><rect x="11" y="5" width="1" height="6" fill="#fde8e2"/><rect x="13" y="5" width="1" height="6" fill="#fff"/><rect x="1" y="11" width="14" height="1" fill="#c00000"/><rect x="2" y="4" width="13" height="1" fill="#c00000"/><rect x="2" y="4" width="1" height="8" fill="#c00000"/><rect x="14" y="4" width="1" height="8" fill="#c00000"/><path d="M5.5 10.5 V6.5 L7.5 9 L9.5 6.5 V10.5" stroke="#7a0000" stroke-width="1.3" fill="none" shape-rendering="auto"/></svg>
<div class="t" style="left:286px;top:303px">SFPEN</div>
<div class="a" style="left:248px;top:323px;width:9px;height:9px;border:1px solid #808080;background:#fff"></div>
<div class="a" style="left:250px;top:327px;width:5px;height:1px;background:#000"></div>
<div class="a" style="left:252px;top:325px;width:1px;height:5px;background:#000"></div>
<div class="a" style="left:258px;top:327px;width:5px;height:1px;border-top:1px dotted #808080"></div>
<svg class="a" style="left:265px;top:320px" width="15" height="12" shape-rendering="crispEdges"><rect x="1" y="2" width="12" height="2" fill="#fbd3c4"/><rect x="2" y="1" width="4" height="1" fill="#fbe3da"/><rect x="1" y="4" width="1" height="7" fill="#fbd3c4"/><rect x="2" y="0" width="4" height="1" fill="#c00000"/><rect x="1" y="1" width="1" height="1" fill="#c00000"/><rect x="6" y="1" width="7" height="1" fill="#c00000"/><rect x="13" y="2" width="1" height="2" fill="#c00000"/><rect x="0" y="2" width="1" height="9" fill="#c00000"/><rect x="3" y="5" width="11" height="6" fill="#f3b8ac"/><rect x="3" y="5" width="1" height="6" fill="#fff"/><rect x="11" y="5" width="1" height="6" fill="#fde8e2"/><rect x="13" y="5" width="1" height="6" fill="#fff"/><rect x="1" y="11" width="14" height="1" fill="#c00000"/><rect x="2" y="4" width="13" height="1" fill="#c00000"/><rect x="2" y="4" width="1" height="8" fill="#c00000"/><rect x="14" y="4" width="1" height="8" fill="#c00000"/><path d="M5.5 10.5 V6.5 L7.5 9 L9.5 6.5 V10.5" stroke="#7a0000" stroke-width="1.3" fill="none" shape-rendering="auto"/></svg>
<div class="t" style="left:286px;top:321px">Trustee</div>
<!-- combo -->
<div class="a" style="left:431px;top:82px;width:593px;height:20px;background:#fff;border-top:1px solid #a0a0a0;border-left:1px solid #a0a0a0;box-shadow:inset 1px 1px 0 #696969"></div>

<!-- grid box -->
<div id="grid" class="a" style="left:431px;top:110px;width:593px;height:351px;background:#fff;border:1px solid #a0a0a0;border-right:none"></div>

<!-- GRID -->
<div class="t" style="left:436px;top:88px">#EntityDetails.ClientDetails</div>
<div class="a btn" style="left:1008px;top:85px;width:16px;height:16px;border-right:none"></div>
<svg class="a" style="left:1008px;top:85px" width="16" height="16"><path d="M5 6 H12 L8.5 10 Z" fill="#000"/></svg>
<div class="a" style="left:432px;top:111px;width:565px;height:16px;background:#f0f0f0;border-top:1px solid #fff"></div>
<div class="a" style="left:432px;top:126px;width:565px;height:1px;background:#000"></div>
<div class="a" style="left:432px;top:125px;width:565px;height:1px;background:#8a8a8a"></div>
<div class="a" style="left:553px;top:111px;width:1px;height:16px;background:#000"></div>
<div class="a" style="left:554px;top:111px;width:1px;height:14px;background:#fff"></div>
<div class="a" style="left:618px;top:111px;width:1px;height:16px;background:#000"></div>
<div class="a" style="left:619px;top:111px;width:1px;height:14px;background:#fff"></div>
<div class="a" style="left:931px;top:111px;width:1px;height:16px;background:#000"></div>
<div class="a" style="left:932px;top:111px;width:1px;height:14px;background:#fff"></div>
<div class="a" style="left:996px;top:111px;width:1px;height:16px;background:#000"></div>
<div class="a" style="left:997px;top:111px;width:1px;height:14px;background:#fff"></div>
<div class="t" style="left:478px;top:115px">Name</div>
<div class="t" style="left:573px;top:115px;letter-spacing:0">Level</div>
<div class="t" style="left:761px;top:115px">Value</div>
<div class="t" style="left:955px;top:115px;letter-spacing:0">Null</div>
<div class="a" style="left:432px;top:127px;width:565px;height:15px;background:#f5f3ee"></div>
<div class="a" style="left:432px;top:142px;width:565px;height:1px;background:#c8c8c8"></div>
<div class="a" style="left:569px;top:127px;width:33px;height:15px;background:#fff"></div>
<div class="t" style="left:434px;top:130px;letter-spacing:-0.3px">ClientName1</div>
<svg class="a" style="left:570px;top:129px" width="16" height="12"><path d="M1.6 6 V1 L4 3.8 L6.4 1 V6" stroke="#a81818" stroke-width="1.7" fill="none"/><rect x="2" y="6.2" width="4" height="4" fill="#b8bcd0"/><path d="M2 7 H6 M2 10 H6" stroke="#33335a" stroke-width="0.8"/><path d="M5 8.5 H9" stroke="#000" stroke-width="1.1"/><rect x="10.5" y="6.5" width="4" height="4" fill="#f3caca" stroke="#d83c3c"/></svg>
<svg class="a" style="left:588px;top:129px" width="14" height="12"><rect x="0" y="0" width="12" height="10" fill="#d43c3c"/><rect x="1" y="1" width="2" height="2" fill="#fff"/><rect x="4.5" y="1" width="2" height="2" fill="#fff"/><rect x="8" y="1" width="2" height="2" fill="#fff"/><rect x="1" y="4.5" width="1" height="1.5" fill="#fff"/><rect x="1" y="7.5" width="1" height="1.5" fill="#fff"/><rect x="2.5" y="4.5" width="11" height="6" fill="#fff" stroke="#d43c3c"/><path d="M4 6.5 H7.5 M4 8.5 H7.5" stroke="#d43c3c"/><rect x="9" y="6" width="1" height="1" fill="#d43c3c"/><rect x="11" y="6" width="1" height="1" fill="#d43c3c"/><rect x="9" y="8" width="1" height="1" fill="#d43c3c"/><rect x="11" y="8" width="1" height="1" fill="#d43c3c"/></svg>
<div class="t" style="left:620px;top:130px;color:#000">XYZ Company Pty Ltd</div>
<div class="a" style="left:957px;top:127px;width:14px;height:15px;background:#fff"></div><div class="a" style="left:958px;top:130px;width:12px;height:11px;background:#fff;border:1px solid #b4b4b4;border-top-color:#787878;border-left-color:#787878"></div>
<div class="a" style="left:432px;top:143px;width:565px;height:15px;background:#fff"></div>
<div class="a" style="left:432px;top:158px;width:565px;height:1px;background:#c8c8c8"></div>
<div class="a" style="left:569px;top:143px;width:33px;height:15px;background:#fff"></div>
<div class="t" style="left:434px;top:146px;letter-spacing:-0.3px">ClientName2</div>
<svg class="a" style="left:570px;top:145px" width="16" height="12"><path d="M1.6 6 V1 L4 3.8 L6.4 1 V6" stroke="#a81818" stroke-width="1.7" fill="none"/><rect x="2" y="6.2" width="4" height="4" fill="#b8bcd0"/><path d="M2 7 H6 M2 10 H6" stroke="#33335a" stroke-width="0.8"/><path d="M5 8.5 H9" stroke="#000" stroke-width="1.1"/><rect x="10.5" y="6.5" width="4" height="4" fill="#f3caca" stroke="#d83c3c"/></svg>
<svg class="a" style="left:588px;top:145px" width="14" height="12"><rect x="0" y="0" width="12" height="10" fill="#d43c3c"/><rect x="1" y="1" width="2" height="2" fill="#fff"/><rect x="4.5" y="1" width="2" height="2" fill="#fff"/><rect x="8" y="1" width="2" height="2" fill="#fff"/><rect x="1" y="4.5" width="1" height="1.5" fill="#fff"/><rect x="1" y="7.5" width="1" height="1.5" fill="#fff"/><rect x="2.5" y="4.5" width="11" height="6" fill="#fff" stroke="#d43c3c"/><path d="M4 6.5 H7.5 M4 8.5 H7.5" stroke="#d43c3c"/><rect x="9" y="6" width="1" height="1" fill="#d43c3c"/><rect x="11" y="6" width="1" height="1" fill="#d43c3c"/><rect x="9" y="8" width="1" height="1" fill="#d43c3c"/><rect x="11" y="8" width="1" height="1" fill="#d43c3c"/></svg>
<div class="a" style="left:957px;top:143px;width:14px;height:15px;background:#fff"></div><div class="a" style="left:958px;top:146px;width:12px;height:11px;background:#fff;border:1px solid #b4b4b4;border-top-color:#787878;border-left-color:#787878"></div>
<div class="a" style="left:432px;top:159px;width:565px;height:15px;background:#f5f3ee"></div>
<div class="a" style="left:432px;top:174px;width:565px;height:1px;background:#c8c8c8"></div>
<div class="a" style="left:569px;top:159px;width:33px;height:15px;background:#fff"></div>
<div class="t" style="left:434px;top:162px;letter-spacing:-0.3px">ClientName3</div>
<svg class="a" style="left:570px;top:161px" width="16" height="12"><path d="M1.6 6 V1 L4 3.8 L6.4 1 V6" stroke="#a81818" stroke-width="1.7" fill="none"/><rect x="2" y="6.2" width="4" height="4" fill="#b8bcd0"/><path d="M2 7 H6 M2 10 H6" stroke="#33335a" stroke-width="0.8"/><path d="M5 8.5 H9" stroke="#000" stroke-width="1.1"/><rect x="10.5" y="6.5" width="4" height="4" fill="#f3caca" stroke="#d83c3c"/></svg>
<svg class="a" style="left:588px;top:161px" width="14" height="12"><rect x="0" y="0" width="12" height="10" fill="#d43c3c"/><rect x="1" y="1" width="2" height="2" fill="#fff"/><rect x="4.5" y="1" width="2" height="2" fill="#fff"/><rect x="8" y="1" width="2" height="2" fill="#fff"/><rect x="1" y="4.5" width="1" height="1.5" fill="#fff"/><rect x="1" y="7.5" width="1" height="1.5" fill="#fff"/><rect x="2.5" y="4.5" width="11" height="6" fill="#fff" stroke="#d43c3c"/><path d="M4 6.5 H7.5 M4 8.5 H7.5" stroke="#d43c3c"/><rect x="9" y="6" width="1" height="1" fill="#d43c3c"/><rect x="11" y="6" width="1" height="1" fill="#d43c3c"/><rect x="9" y="8" width="1" height="1" fill="#d43c3c"/><rect x="11" y="8" width="1" height="1" fill="#d43c3c"/></svg>
<div class="a" style="left:957px;top:159px;width:14px;height:15px;background:#fff"></div><div class="a" style="left:958px;top:162px;width:12px;height:11px;background:#fff;border:1px solid #b4b4b4;border-top-color:#787878;border-left-color:#787878"></div>
<div class="a" style="left:432px;top:175px;width:565px;height:15px;background:#fff"></div>
<div class="a" style="left:432px;top:190px;width:565px;height:1px;background:#c8c8c8"></div>
<div class="a" style="left:569px;top:175px;width:33px;height:15px;background:#fff"></div>
<div class="t" style="left:434px;top:178px;letter-spacing:-0.3px">ABNOrACNOrOther</div>
<svg class="a" style="left:570px;top:177px" width="16" height="12"><path d="M1.6 6 V1 L4 3.8 L6.4 1 V6" stroke="#a81818" stroke-width="1.7" fill="none"/><rect x="2" y="6.2" width="4" height="4" fill="#b8bcd0"/><path d="M2 7 H6 M2 10 H6" stroke="#33335a" stroke-width="0.8"/><path d="M5 8.5 H9" stroke="#000" stroke-width="1.1"/><rect x="10.5" y="6.5" width="4" height="4" fill="#f3caca" stroke="#d83c3c"/></svg>
<svg class="a" style="left:588px;top:177px" width="14" height="12"><rect x="0" y="0" width="12" height="10" fill="#d43c3c"/><rect x="1" y="1" width="2" height="2" fill="#fff"/><rect x="4.5" y="1" width="2" height="2" fill="#fff"/><rect x="8" y="1" width="2" height="2" fill="#fff"/><rect x="1" y="4.5" width="1" height="1.5" fill="#fff"/><rect x="1" y="7.5" width="1" height="1.5" fill="#fff"/><rect x="2.5" y="4.5" width="11" height="6" fill="#fff" stroke="#d43c3c"/><path d="M4 6.5 H7.5 M4 8.5 H7.5" stroke="#d43c3c"/><rect x="9" y="6" width="1" height="1" fill="#d43c3c"/><rect x="11" y="6" width="1" height="1" fill="#d43c3c"/><rect x="9" y="8" width="1" height="1" fill="#d43c3c"/><rect x="11" y="8" width="1" height="1" fill="#d43c3c"/></svg>
<div class="a" style="left:957px;top:175px;width:14px;height:15px;background:#fff"></div><div class="a" style="left:958px;top:178px;width:12px;height:11px;background:#fff;border:1px solid #b4b4b4;border-top-color:#787878;border-left-color:#787878"></div>
<div class="a" style="left:432px;top:191px;width:565px;height:15px;background:#f5f3ee"></div>
<div class="a" style="left:432px;top:206px;width:565px;height:1px;background:#c8c8c8"></div>
<div class="a" style="left:569px;top:191px;width:33px;height:15px;background:#fff"></div>
<div class="t" style="left:434px;top:194px;letter-spacing:-0.3px">Entity</div>
<svg class="a" style="left:570px;top:193px" width="16" height="12"><path d="M1.6 6 V1 L4 3.8 L6.4 1 V6" stroke="#a81818" stroke-width="1.7" fill="none"/><rect x="2" y="6.2" width="4" height="4" fill="#b8bcd0"/><path d="M2 7 H6 M2 10 H6" stroke="#33335a" stroke-width="0.8"/><path d="M5 8.5 H9" stroke="#000" stroke-width="1.1"/><rect x="10.5" y="6.5" width="4" height="4" fill="#f3caca" stroke="#d83c3c"/></svg>
<svg class="a" style="left:588px;top:193px" width="14" height="12"><rect x="0" y="0" width="12" height="10" fill="#d43c3c"/><rect x="1" y="1" width="2" height="2" fill="#fff"/><rect x="4.5" y="1" width="2" height="2" fill="#fff"/><rect x="8" y="1" width="2" height="2" fill="#fff"/><rect x="1" y="4.5" width="1" height="1.5" fill="#fff"/><rect x="1" y="7.5" width="1" height="1.5" fill="#fff"/><rect x="2.5" y="4.5" width="11" height="6" fill="#fff" stroke="#d43c3c"/><path d="M4 6.5 H7.5 M4 8.5 H7.5" stroke="#d43c3c"/><rect x="9" y="6" width="1" height="1" fill="#d43c3c"/><rect x="11" y="6" width="1" height="1" fill="#d43c3c"/><rect x="9" y="8" width="1" height="1" fill="#d43c3c"/><rect x="11" y="8" width="1" height="1" fill="#d43c3c"/></svg>
<div class="t" style="left:620px;top:194px;color:#000">Company</div>
<div class="a" style="left:914px;top:206px;width:18px;height:1px;background:#000"></div><div class="a" style="left:915px;top:191px;width:16px;height:15px;background:#efefef;border-left:1px solid #fff;border-top:1px solid #fff;box-shadow:inset -1px 0 0 #6a6a6a"></div>
<svg class="a" style="left:914px;top:191px" width="16" height="16"><path d="M5 7 H12 L8.5 11 Z" fill="#000"/></svg>
<div class="a" style="left:957px;top:191px;width:14px;height:15px;background:#fff"></div><div class="a" style="left:958px;top:194px;width:12px;height:11px;background:#fff;border:1px solid #b4b4b4;border-top-color:#787878;border-left-color:#787878"></div>
<div class="a" style="left:432px;top:207px;width:565px;height:15px;background:#fff"></div>
<div class="a" style="left:432px;top:222px;width:565px;height:1px;background:#c8c8c8"></div>
<div class="a" style="left:569px;top:207px;width:33px;height:15px;background:#fff"></div>
<div class="t" style="left:434px;top:210px;letter-spacing:-0.3px">EntityType</div>
<svg class="a" style="left:570px;top:209px" width="16" height="12"><path d="M1.6 6 V1 L4 3.8 L6.4 1 V6" stroke="#a81818" stroke-width="1.7" fill="none"/><rect x="2" y="6.2" width="4" height="4" fill="#b8bcd0"/><path d="M2 7 H6 M2 10 H6" stroke="#33335a" stroke-width="0.8"/><path d="M5 8.5 H9" stroke="#000" stroke-width="1.1"/><rect x="10.5" y="6.5" width="4" height="4" fill="#f3caca" stroke="#d83c3c"/></svg>
<svg class="a" style="left:588px;top:209px" width="14" height="12"><rect x="0" y="0" width="12" height="10" fill="#d43c3c"/><rect x="1" y="1" width="2" height="2" fill="#fff"/><rect x="4.5" y="1" width="2" height="2" fill="#fff"/><rect x="8" y="1" width="2" height="2" fill="#fff"/><rect x="1" y="4.5" width="1" height="1.5" fill="#fff"/><rect x="1" y="7.5" width="1" height="1.5" fill="#fff"/><rect x="2.5" y="4.5" width="11" height="6" fill="#fff" stroke="#d43c3c"/><path d="M4 6.5 H7.5 M4 8.5 H7.5" stroke="#d43c3c"/><rect x="9" y="6" width="1" height="1" fill="#d43c3c"/><rect x="11" y="6" width="1" height="1" fill="#d43c3c"/><rect x="9" y="8" width="1" height="1" fill="#d43c3c"/><rect x="11" y="8" width="1" height="1" fill="#d43c3c"/></svg>
<div class="t" style="left:620px;top:210px;color:#000">Non Reporting</div>
<div class="a" style="left:914px;top:222px;width:18px;height:1px;background:#000"></div><div class="a" style="left:915px;top:207px;width:16px;height:15px;background:#efefef;border-left:1px solid #fff;border-top:1px solid #fff;box-shadow:inset -1px 0 0 #6a6a6a"></div>
<svg class="a" style="left:914px;top:207px" width="16" height="16"><path d="M5 7 H12 L8.5 11 Z" fill="#000"/></svg>
<div class="a" style="left:957px;top:207px;width:14px;height:15px;background:#fff"></div><div class="a" style="left:958px;top:210px;width:12px;height:11px;background:#fff;border:1px solid #b4b4b4;border-top-color:#787878;border-left-color:#787878"></div>
<div class="a" style="left:432px;top:223px;width:565px;height:15px;background:#f5f3ee"></div>
<div class="a" style="left:432px;top:238px;width:565px;height:1px;background:#c8c8c8"></div>
<div class="a" style="left:569px;top:223px;width:33px;height:15px;background:#fff"></div>
<div class="t" style="left:434px;top:226px;letter-spacing:-0.3px">FirstTimeAdoptionAIFRS</div>
<svg class="a" style="left:570px;top:225px" width="16" height="12"><path d="M1.6 6 V1 L4 3.8 L6.4 1 V6" stroke="#a81818" stroke-width="1.7" fill="none"/><rect x="2" y="6.2" width="4" height="4" fill="#b8bcd0"/><path d="M2 7 H6 M2 10 H6" stroke="#33335a" stroke-width="0.8"/><path d="M5 8.5 H9" stroke="#000" stroke-width="1.1"/><rect x="10.5" y="6.5" width="4" height="4" fill="#f3caca" stroke="#d83c3c"/></svg>
<svg class="a" style="left:588px;top:225px" width="14" height="12"><rect x="0" y="0" width="12" height="10" fill="#d43c3c"/><rect x="1" y="1" width="2" height="2" fill="#fff"/><rect x="4.5" y="1" width="2" height="2" fill="#fff"/><rect x="8" y="1" width="2" height="2" fill="#fff"/><rect x="1" y="4.5" width="1" height="1.5" fill="#fff"/><rect x="1" y="7.5" width="1" height="1.5" fill="#fff"/><rect x="2.5" y="4.5" width="11" height="6" fill="#fff" stroke="#d43c3c"/><path d="M4 6.5 H7.5 M4 8.5 H7.5" stroke="#d43c3c"/><rect x="9" y="6" width="1" height="1" fill="#d43c3c"/><rect x="11" y="6" width="1" height="1" fill="#d43c3c"/><rect x="9" y="8" width="1" height="1" fill="#d43c3c"/><rect x="11" y="8" width="1" height="1" fill="#d43c3c"/></svg>
<div class="t" style="left:620px;top:226px;color:#000">No</div>
<div class="a" style="left:914px;top:238px;width:18px;height:1px;background:#000"></div><div class="a" style="left:915px;top:223px;width:16px;height:15px;background:#efefef;border-left:1px solid #fff;border-top:1px solid #fff;box-shadow:inset -1px 0 0 #6a6a6a"></div>
<svg class="a" style="left:914px;top:223px" width="16" height="16"><path d="M5 7 H12 L8.5 11 Z" fill="#000"/></svg>
<div class="a" style="left:957px;top:223px;width:14px;height:15px;background:#fff"></div><div class="a" style="left:958px;top:226px;width:12px;height:11px;background:#fff;border:1px solid #b4b4b4;border-top-color:#787878;border-left-color:#787878"></div>
<div class="a" style="left:432px;top:239px;width:565px;height:15px;background:#fff"></div>
<div class="a" style="left:432px;top:254px;width:565px;height:1px;background:#c8c8c8"></div>
<div class="a" style="left:619px;top:239px;width:377px;height:15px;background:#0078d7"></div>
<div class="a" style="left:569px;top:239px;width:33px;height:15px;background:#fff"></div>
<div class="t" style="left:434px;top:242px;letter-spacing:-0.3px">Audited</div>
<svg class="a" style="left:570px;top:241px" width="16" height="12"><path d="M1.6 6 V1 L4 3.8 L6.4 1 V6" stroke="#a81818" stroke-width="1.7" fill="none"/><rect x="2" y="6.2" width="4" height="4" fill="#b8bcd0"/><path d="M2 7 H6 M2 10 H6" stroke="#33335a" stroke-width="0.8"/><path d="M5 8.5 H9" stroke="#000" stroke-width="1.1"/><rect x="10.5" y="6.5" width="4" height="4" fill="#f3caca" stroke="#d83c3c"/></svg>
<svg class="a" style="left:588px;top:241px" width="14" height="12"><rect x="0" y="0" width="12" height="10" fill="#4a5ab0"/><rect x="1" y="1" width="2" height="2" fill="#fff"/><rect x="4.5" y="1" width="2" height="2" fill="#fff"/><rect x="8" y="1" width="2" height="2" fill="#fff"/><rect x="1" y="4.5" width="1" height="1.5" fill="#fff"/><rect x="1" y="7.5" width="1" height="1.5" fill="#fff"/><rect x="2.5" y="4.5" width="11" height="6" fill="#fff" stroke="#4a5ab0"/><path d="M4 6.5 H7.5 M4 8.5 H7.5" stroke="#4a5ab0"/><rect x="9" y="6" width="1" height="1" fill="#4a5ab0"/><rect x="11" y="6" width="1" height="1" fill="#4a5ab0"/><rect x="9" y="8" width="1" height="1" fill="#4a5ab0"/><rect x="11" y="8" width="1" height="1" fill="#4a5ab0"/></svg>
<div class="t" style="left:620px;top:242px;color:#fff">Yes</div>
<div class="a" style="left:914px;top:254px;width:18px;height:1px;background:#000"></div><div class="a" style="left:915px;top:239px;width:16px;height:15px;background:#efefef;border-left:1px solid #fff;border-top:1px solid #fff;box-shadow:inset -1px 0 0 #6a6a6a"></div>
<svg class="a" style="left:914px;top:239px" width="16" height="16"><path d="M5 7 H12 L8.5 11 Z" fill="#000"/></svg>
<div class="a" style="left:958px;top:240px;width:12px;height:2px;background:#fff"></div><div class="a" style="left:958px;top:242px;width:12px;height:11px;background:#fff;border:1px solid #b4b4b4;border-top-color:#787878;border-left-color:#787878"></div>
<div class="a" style="left:432px;top:255px;width:565px;height:15px;background:#f5f3ee"></div>
<div class="a" style="left:432px;top:270px;width:565px;height:1px;background:#c8c8c8"></div>
<div class="a" style="left:569px;top:255px;width:33px;height:15px;background:#fff"></div>
<div class="t" style="left:434px;top:258px;letter-spacing:-0.3px">YearStartDate</div>
<svg class="a" style="left:570px;top:257px" width="16" height="12"><path d="M1.6 6 V1 L4 3.8 L6.4 1 V6" stroke="#a81818" stroke-width="1.7" fill="none"/><rect x="2" y="6.2" width="4" height="4" fill="#b8bcd0"/><path d="M2 7 H6 M2 10 H6" stroke="#33335a" stroke-width="0.8"/><path d="M5 8.5 H9" stroke="#000" stroke-width="1.1"/><rect x="10.5" y="6.5" width="4" height="4" fill="#f3caca" stroke="#d83c3c"/></svg>
<svg class="a" style="left:588px;top:257px" width="14" height="12"><rect x="0" y="0" width="12" height="10" fill="#d43c3c"/><rect x="1" y="1" width="2" height="2" fill="#fff"/><rect x="4.5" y="1" width="2" height="2" fill="#fff"/><rect x="8" y="1" width="2" height="2" fill="#fff"/><rect x="1" y="4.5" width="1" height="1.5" fill="#fff"/><rect x="1" y="7.5" width="1" height="1.5" fill="#fff"/><rect x="2.5" y="4.5" width="11" height="6" fill="#fff" stroke="#d43c3c"/><path d="M4 6.5 H7.5 M4 8.5 H7.5" stroke="#d43c3c"/><rect x="9" y="6" width="1" height="1" fill="#d43c3c"/><rect x="11" y="6" width="1" height="1" fill="#d43c3c"/><rect x="9" y="8" width="1" height="1" fill="#d43c3c"/><rect x="11" y="8" width="1" height="1" fill="#d43c3c"/></svg>
<div class="a" style="left:957px;top:255px;width:14px;height:15px;background:#fff"></div><div class="a" style="left:958px;top:258px;width:12px;height:11px;background:#fff;border:1px solid #b4b4b4;border-top-color:#787878;border-left-color:#787878"></div>
<div class="a" style="left:432px;top:271px;width:565px;height:15px;background:#fff"></div>
<div class="a" style="left:432px;top:286px;width:565px;height:1px;background:#c8c8c8"></div>
<div class="a" style="left:569px;top:271px;width:33px;height:15px;background:#fff"></div>
<div class="t" style="left:434px;top:274px;letter-spacing:-0.3px">YearEndDate</div>
<svg class="a" style="left:570px;top:273px" width="16" height="12"><path d="M1.6 6 V1 L4 3.8 L6.4 1 V6" stroke="#a81818" stroke-width="1.7" fill="none"/><rect x="2" y="6.2" width="4" height="4" fill="#b8bcd0"/><path d="M2 7 H6 M2 10 H6" stroke="#33335a" stroke-width="0.8"/><path d="M5 8.5 H9" stroke="#000" stroke-width="1.1"/><rect x="10.5" y="6.5" width="4" height="4" fill="#f3caca" stroke="#d83c3c"/></svg>
<svg class="a" style="left:588px;top:273px" width="14" height="12"><rect x="0" y="0" width="12" height="10" fill="#d43c3c"/><rect x="1" y="1" width="2" height="2" fill="#fff"/><rect x="4.5" y="1" width="2" height="2" fill="#fff"/><rect x="8" y="1" width="2" height="2" fill="#fff"/><rect x="1" y="4.5" width="1" height="1.5" fill="#fff"/><rect x="1" y="7.5" width="1" height="1.5" fill="#fff"/><rect x="2.5" y="4.5" width="11" height="6" fill="#fff" stroke="#d43c3c"/><path d="M4 6.5 H7.5 M4 8.5 H7.5" stroke="#d43c3c"/><rect x="9" y="6" width="1" height="1" fill="#d43c3c"/><rect x="11" y="6" width="1" height="1" fill="#d43c3c"/><rect x="9" y="8" width="1" height="1" fill="#d43c3c"/><rect x="11" y="8" width="1" height="1" fill="#d43c3c"/></svg>
<div class="a" style="left:957px;top:271px;width:14px;height:15px;background:#fff"></div><div class="a" style="left:958px;top:274px;width:12px;height:11px;background:#fff;border:1px solid #b4b4b4;border-top-color:#787878;border-left-color:#787878"></div>
<div class="a" style="left:432px;top:287px;width:565px;height:15px;background:#f5f3ee"></div>
<div class="a" style="left:432px;top:302px;width:565px;height:1px;background:#c8c8c8"></div>
<div class="a" style="left:569px;top:287px;width:33px;height:15px;background:#fff"></div>
<div class="t" style="left:434px;top:290px;letter-spacing:-0.3px">EntitySize</div>
<svg class="a" style="left:570px;top:289px" width="16" height="12"><path d="M1.6 6 V1 L4 3.8 L6.4 1 V6" stroke="#a81818" stroke-width="1.7" fill="none"/><rect x="2" y="6.2" width="4" height="4" fill="#b8bcd0"/><path d="M2 7 H6 M2 10 H6" stroke="#33335a" stroke-width="0.8"/><path d="M5 8.5 H9" stroke="#000" stroke-width="1.1"/><rect x="10.5" y="6.5" width="4" height="4" fill="#f3caca" stroke="#d83c3c"/></svg>
<svg class="a" style="left:588px;top:289px" width="14" height="12"><rect x="0" y="0" width="12" height="10" fill="#d43c3c"/><rect x="1" y="1" width="2" height="2" fill="#fff"/><rect x="4.5" y="1" width="2" height="2" fill="#fff"/><rect x="8" y="1" width="2" height="2" fill="#fff"/><rect x="1" y="4.5" width="1" height="1.5" fill="#fff"/><rect x="1" y="7.5" width="1" height="1.5" fill="#fff"/><rect x="2.5" y="4.5" width="11" height="6" fill="#fff" stroke="#d43c3c"/><path d="M4 6.5 H7.5 M4 8.5 H7.5" stroke="#d43c3c"/><rect x="9" y="6" width="1" height="1" fill="#d43c3c"/><rect x="11" y="6" width="1" height="1" fill="#d43c3c"/><rect x="9" y="8" width="1" height="1" fill="#d43c3c"/><rect x="11" y="8" width="1" height="1" fill="#d43c3c"/></svg>
<div class="t" style="left:620px;top:290px;color:#000">Small</div>
<div class="a" style="left:914px;top:302px;width:18px;height:1px;background:#000"></div><div class="a" style="left:915px;top:287px;width:16px;height:15px;background:#efefef;border-left:1px solid #fff;border-top:1px solid #fff;box-shadow:inset -1px 0 0 #6a6a6a"></div>
<svg class="a" style="left:914px;top:287px" width="16" height="16"><path d="M5 7 H12 L8.5 11 Z" fill="#000"/></svg>
<div class="a" style="left:957px;top:287px;width:14px;height:15px;background:#fff"></div><div class="a" style="left:958px;top:290px;width:12px;height:11px;background:#fff;border:1px solid #b4b4b4;border-top-color:#787878;border-left-color:#787878"></div>
<div class="a" style="left:432px;top:303px;width:565px;height:15px;background:#fff"></div>
<div class="a" style="left:432px;top:318px;width:565px;height:1px;background:#c8c8c8"></div>
<div class="a" style="left:569px;top:303px;width:33px;height:15px;background:#fff"></div>
<div class="t" style="left:434px;top:306px;letter-spacing:-0.3px">PeriodStartDate</div>
<svg class="a" style="left:570px;top:305px" width="16" height="12"><path d="M1.6 6 V1 L4 3.8 L6.4 1 V6" stroke="#a81818" stroke-width="1.7" fill="none"/><rect x="2" y="6.2" width="4" height="4" fill="#b8bcd0"/><path d="M2 7 H6 M2 10 H6" stroke="#33335a" stroke-width="0.8"/><path d="M5 8.5 H9" stroke="#000" stroke-width="1.1"/><rect x="10.5" y="6.5" width="4" height="4" fill="#f3caca" stroke="#d83c3c"/></svg>
<svg class="a" style="left:588px;top:305px" width="14" height="12"><rect x="0" y="0" width="12" height="10" fill="#d43c3c"/><rect x="1" y="1" width="2" height="2" fill="#fff"/><rect x="4.5" y="1" width="2" height="2" fill="#fff"/><rect x="8" y="1" width="2" height="2" fill="#fff"/><rect x="1" y="4.5" width="1" height="1.5" fill="#fff"/><rect x="1" y="7.5" width="1" height="1.5" fill="#fff"/><rect x="2.5" y="4.5" width="11" height="6" fill="#fff" stroke="#d43c3c"/><path d="M4 6.5 H7.5 M4 8.5 H7.5" stroke="#d43c3c"/><rect x="9" y="6" width="1" height="1" fill="#d43c3c"/><rect x="11" y="6" width="1" height="1" fill="#d43c3c"/><rect x="9" y="8" width="1" height="1" fill="#d43c3c"/><rect x="11" y="8" width="1" height="1" fill="#d43c3c"/></svg>
<div class="a" style="left:957px;top:303px;width:14px;height:15px;background:#fff"></div><div class="a" style="left:958px;top:306px;width:12px;height:11px;background:#fff;border:1px solid #b4b4b4;border-top-color:#787878;border-left-color:#787878"></div>
<div class="a" style="left:432px;top:319px;width:565px;height:15px;background:#f5f3ee"></div>
<div class="a" style="left:432px;top:334px;width:565px;height:1px;background:#c8c8c8"></div>
<div class="a" style="left:569px;top:319px;width:33px;height:15px;background:#fff"></div>
<div class="t" style="left:434px;top:322px;letter-spacing:-0.3px">PeriodEndDate</div>
<svg class="a" style="left:570px;top:321px" width="16" height="12"><path d="M1.6 6 V1 L4 3.8 L6.4 1 V6" stroke="#a81818" stroke-width="1.7" fill="none"/><rect x="2" y="6.2" width="4" height="4" fill="#b8bcd0"/><path d="M2 7 H6 M2 10 H6" stroke="#33335a" stroke-width="0.8"/><path d="M5 8.5 H9" stroke="#000" stroke-width="1.1"/><rect x="10.5" y="6.5" width="4" height="4" fill="#f3caca" stroke="#d83c3c"/></svg>
<svg class="a" style="left:588px;top:321px" width="14" height="12"><rect x="0" y="0" width="12" height="10" fill="#d43c3c"/><rect x="1" y="1" width="2" height="2" fill="#fff"/><rect x="4.5" y="1" width="2" height="2" fill="#fff"/><rect x="8" y="1" width="2" height="2" fill="#fff"/><rect x="1" y="4.5" width="1" height="1.5" fill="#fff"/><rect x="1" y="7.5" width="1" height="1.5" fill="#fff"/><rect x="2.5" y="4.5" width="11" height="6" fill="#fff" stroke="#d43c3c"/><path d="M4 6.5 H7.5 M4 8.5 H7.5" stroke="#d43c3c"/><rect x="9" y="6" width="1" height="1" fill="#d43c3c"/><rect x="11" y="6" width="1" height="1" fill="#d43c3c"/><rect x="9" y="8" width="1" height="1" fill="#d43c3c"/><rect x="11" y="8" width="1" height="1" fill="#d43c3c"/></svg>
<div class="a" style="left:957px;top:319px;width:14px;height:15px;background:#fff"></div><div class="a" style="left:958px;top:322px;width:12px;height:11px;background:#fff;border:1px solid #b4b4b4;border-top-color:#787878;border-left-color:#787878"></div>
<div class="a" style="left:432px;top:335px;width:565px;height:15px;background:#fff"></div>
<div class="a" style="left:432px;top:350px;width:565px;height:1px;background:#c8c8c8"></div>
<div class="a" style="left:569px;top:335px;width:33px;height:15px;background:#fff"></div>
<div class="t" style="left:434px;top:338px;letter-spacing:-0.3px">StateIncorporation</div>
<svg class="a" style="left:570px;top:337px" width="16" height="12"><path d="M1.6 6 V1 L4 3.8 L6.4 1 V6" stroke="#a81818" stroke-width="1.7" fill="none"/><rect x="2" y="6.2" width="4" height="4" fill="#b8bcd0"/><path d="M2 7 H6 M2 10 H6" stroke="#33335a" stroke-width="0.8"/><path d="M5 8.5 H9" stroke="#000" stroke-width="1.1"/><rect x="10.5" y="6.5" width="4" height="4" fill="#f3caca" stroke="#d83c3c"/></svg>
<svg class="a" style="left:588px;top:337px" width="14" height="12"><rect x="0" y="0" width="12" height="10" fill="#d43c3c"/><rect x="1" y="1" width="2" height="2" fill="#fff"/><rect x="4.5" y="1" width="2" height="2" fill="#fff"/><rect x="8" y="1" width="2" height="2" fill="#fff"/><rect x="1" y="4.5" width="1" height="1.5" fill="#fff"/><rect x="1" y="7.5" width="1" height="1.5" fill="#fff"/><rect x="2.5" y="4.5" width="11" height="6" fill="#fff" stroke="#d43c3c"/><path d="M4 6.5 H7.5 M4 8.5 H7.5" stroke="#d43c3c"/><rect x="9" y="6" width="1" height="1" fill="#d43c3c"/><rect x="11" y="6" width="1" height="1" fill="#d43c3c"/><rect x="9" y="8" width="1" height="1" fill="#d43c3c"/><rect x="11" y="8" width="1" height="1" fill="#d43c3c"/></svg>
<div class="a" style="left:914px;top:350px;width:18px;height:1px;background:#000"></div><div class="a" style="left:915px;top:335px;width:16px;height:15px;background:#efefef;border-left:1px solid #fff;border-top:1px solid #fff;box-shadow:inset -1px 0 0 #6a6a6a"></div>
<svg class="a" style="left:914px;top:335px" width="16" height="16"><path d="M5 7 H12 L8.5 11 Z" fill="#000"/></svg>
<div class="a" style="left:957px;top:335px;width:14px;height:15px;background:#fff"></div><div class="a" style="left:958px;top:338px;width:12px;height:11px;background:#fff;border:1px solid #b4b4b4;border-top-color:#787878;border-left-color:#787878"></div>
<div class="a" style="left:432px;top:351px;width:565px;height:15px;background:#f5f3ee"></div>
<div class="a" style="left:432px;top:366px;width:565px;height:1px;background:#c8c8c8"></div>
<div class="a" style="left:569px;top:351px;width:33px;height:15px;background:#fff"></div>
<div class="t" style="left:434px;top:354px;letter-spacing:-0.3px">DormantCompany</div>
<svg class="a" style="left:570px;top:353px" width="16" height="12"><path d="M1.6 6 V1 L4 3.8 L6.4 1 V6" stroke="#a81818" stroke-width="1.7" fill="none"/><rect x="2" y="6.2" width="4" height="4" fill="#b8bcd0"/><path d="M2 7 H6 M2 10 H6" stroke="#33335a" stroke-width="0.8"/><path d="M5 8.5 H9" stroke="#000" stroke-width="1.1"/><rect x="10.5" y="6.5" width="4" height="4" fill="#f3caca" stroke="#d83c3c"/></svg>
<svg class="a" style="left:588px;top:353px" width="14" height="12"><rect x="0" y="0" width="12" height="10" fill="#d43c3c"/><rect x="1" y="1" width="2" height="2" fill="#fff"/><rect x="4.5" y="1" width="2" height="2" fill="#fff"/><rect x="8" y="1" width="2" height="2" fill="#fff"/><rect x="1" y="4.5" width="1" height="1.5" fill="#fff"/><rect x="1" y="7.5" width="1" height="1.5" fill="#fff"/><rect x="2.5" y="4.5" width="11" height="6" fill="#fff" stroke="#d43c3c"/><path d="M4 6.5 H7.5 M4 8.5 H7.5" stroke="#d43c3c"/><rect x="9" y="6" width="1" height="1" fill="#d43c3c"/><rect x="11" y="6" width="1" height="1" fill="#d43c3c"/><rect x="9" y="8" width="1" height="1" fill="#d43c3c"/><rect x="11" y="8" width="1" height="1" fill="#d43c3c"/></svg>
<div class="t" style="left:620px;top:354px;color:#000">No</div>
<div class="a" style="left:914px;top:366px;width:18px;height:1px;background:#000"></div><div class="a" style="left:915px;top:351px;width:16px;height:15px;background:#efefef;border-left:1px solid #fff;border-top:1px solid #fff;box-shadow:inset -1px 0 0 #6a6a6a"></div>
<svg class="a" style="left:914px;top:351px" width="16" height="16"><path d="M5 7 H12 L8.5 11 Z" fill="#000"/></svg>
<div class="a" style="left:957px;top:351px;width:14px;height:15px;background:#fff"></div><div class="a" style="left:958px;top:354px;width:12px;height:11px;background:#fff;border:1px solid #b4b4b4;border-top-color:#787878;border-left-color:#787878"></div>
<div class="a" style="left:432px;top:367px;width:565px;height:15px;background:#fff"></div>
<div class="a" style="left:432px;top:382px;width:565px;height:1px;background:#c8c8c8"></div>
<div class="a" style="left:569px;top:367px;width:33px;height:15px;background:#fff"></div>
<div class="t" style="left:434px;top:370px;letter-spacing:-0.3px">CoverPage</div>
<svg class="a" style="left:570px;top:369px" width="16" height="12"><path d="M1.6 6 V1 L4 3.8 L6.4 1 V6" stroke="#a81818" stroke-width="1.7" fill="none"/><rect x="2" y="6.2" width="4" height="4" fill="#b8bcd0"/><path d="M2 7 H6 M2 10 H6" stroke="#33335a" stroke-width="0.8"/><path d="M5 8.5 H9" stroke="#000" stroke-width="1.1"/><rect x="10.5" y="6.5" width="4" height="4" fill="#f3caca" stroke="#d83c3c"/></svg>
<svg class="a" style="left:588px;top:369px" width="14" height="12"><rect x="0" y="0" width="12" height="10" fill="#d43c3c"/><rect x="1" y="1" width="2" height="2" fill="#fff"/><rect x="4.5" y="1" width="2" height="2" fill="#fff"/><rect x="8" y="1" width="2" height="2" fill="#fff"/><rect x="1" y="4.5" width="1" height="1.5" fill="#fff"/><rect x="1" y="7.5" width="1" height="1.5" fill="#fff"/><rect x="2.5" y="4.5" width="11" height="6" fill="#fff" stroke="#d43c3c"/><path d="M4 6.5 H7.5 M4 8.5 H7.5" stroke="#d43c3c"/><rect x="9" y="6" width="1" height="1" fill="#d43c3c"/><rect x="11" y="6" width="1" height="1" fill="#d43c3c"/><rect x="9" y="8" width="1" height="1" fill="#d43c3c"/><rect x="11" y="8" width="1" height="1" fill="#d43c3c"/></svg>
<div class="t" style="left:620px;top:370px;color:#000">Yes</div>
<div class="a" style="left:914px;top:382px;width:18px;height:1px;background:#000"></div><div class="a" style="left:915px;top:367px;width:16px;height:15px;background:#efefef;border-left:1px solid #fff;border-top:1px solid #fff;box-shadow:inset -1px 0 0 #6a6a6a"></div>
<svg class="a" style="left:914px;top:367px" width="16" height="16"><path d="M5 7 H12 L8.5 11 Z" fill="#000"/></svg>
<div class="a" style="left:957px;top:367px;width:14px;height:15px;background:#fff"></div><div class="a" style="left:958px;top:370px;width:12px;height:11px;background:#fff;border:1px solid #b4b4b4;border-top-color:#787878;border-left-color:#787878"></div>
<div class="a" style="left:432px;top:383px;width:565px;height:15px;background:#f5f3ee"></div>
<div class="a" style="left:432px;top:398px;width:565px;height:1px;background:#c8c8c8"></div>
<div class="a" style="left:569px;top:383px;width:33px;height:15px;background:#fff"></div>
<div class="t" style="left:434px;top:386px;letter-spacing:-0.3px">CoverPageLiabilityLimitati</div>
<svg class="a" style="left:570px;top:385px" width="16" height="12"><path d="M1.6 6 V1 L4 3.8 L6.4 1 V6" stroke="#a81818" stroke-width="1.7" fill="none"/><rect x="2" y="6.2" width="4" height="4" fill="#b8bcd0"/><path d="M2 7 H6 M2 10 H6" stroke="#33335a" stroke-width="0.8"/><path d="M5 8.5 H9" stroke="#000" stroke-width="1.1"/><rect x="10.5" y="6.5" width="4" height="4" fill="#f3caca" stroke="#d83c3c"/></svg>
<svg class="a" style="left:588px;top:385px" width="14" height="12"><rect x="0" y="0" width="12" height="10" fill="#d43c3c"/><rect x="1" y="1" width="2" height="2" fill="#fff"/><rect x="4.5" y="1" width="2" height="2" fill="#fff"/><rect x="8" y="1" width="2" height="2" fill="#fff"/><rect x="1" y="4.5" width="1" height="1.5" fill="#fff"/><rect x="1" y="7.5" width="1" height="1.5" fill="#fff"/><rect x="2.5" y="4.5" width="11" height="6" fill="#fff" stroke="#d43c3c"/><path d="M4 6.5 H7.5 M4 8.5 H7.5" stroke="#d43c3c"/><rect x="9" y="6" width="1" height="1" fill="#d43c3c"/><rect x="11" y="6" width="1" height="1" fill="#d43c3c"/><rect x="9" y="8" width="1" height="1" fill="#d43c3c"/><rect x="11" y="8" width="1" height="1" fill="#d43c3c"/></svg>
<div class="t" style="left:620px;top:386px;color:#000">Yes</div>
<div class="a" style="left:914px;top:398px;width:18px;height:1px;background:#000"></div><div class="a" style="left:915px;top:383px;width:16px;height:15px;background:#efefef;border-left:1px solid #fff;border-top:1px solid #fff;box-shadow:inset -1px 0 0 #6a6a6a"></div>
<svg class="a" style="left:914px;top:383px" width="16" height="16"><path d="M5 7 H12 L8.5 11 Z" fill="#000"/></svg>
<div class="a" style="left:957px;top:383px;width:14px;height:15px;background:#fff"></div><div class="a" style="left:958px;top:386px;width:12px;height:11px;background:#fff;border:1px solid #b4b4b4;border-top-color:#787878;border-left-color:#787878"></div>
<div class="a" style="left:432px;top:399px;width:565px;height:15px;background:#fff"></div>
<div class="a" style="left:432px;top:414px;width:565px;height:1px;background:#c8c8c8"></div>
<div class="a" style="left:569px;top:399px;width:33px;height:15px;background:#fff"></div>
<div class="t" style="left:434px;top:402px;letter-spacing:-0.3px">ListedEntity</div>
<svg class="a" style="left:570px;top:401px" width="16" height="12"><path d="M1.6 6 V1 L4 3.8 L6.4 1 V6" stroke="#a81818" stroke-width="1.7" fill="none"/><rect x="2" y="6.2" width="4" height="4" fill="#b8bcd0"/><path d="M2 7 H6 M2 10 H6" stroke="#33335a" stroke-width="0.8"/><path d="M5 8.5 H9" stroke="#000" stroke-width="1.1"/><rect x="10.5" y="6.5" width="4" height="4" fill="#f3caca" stroke="#d83c3c"/></svg>
<svg class="a" style="left:588px;top:401px" width="14" height="12"><rect x="0" y="0" width="12" height="10" fill="#d43c3c"/><rect x="1" y="1" width="2" height="2" fill="#fff"/><rect x="4.5" y="1" width="2" height="2" fill="#fff"/><rect x="8" y="1" width="2" height="2" fill="#fff"/><rect x="1" y="4.5" width="1" height="1.5" fill="#fff"/><rect x="1" y="7.5" width="1" height="1.5" fill="#fff"/><rect x="2.5" y="4.5" width="11" height="6" fill="#fff" stroke="#d43c3c"/><path d="M4 6.5 H7.5 M4 8.5 H7.5" stroke="#d43c3c"/><rect x="9" y="6" width="1" height="1" fill="#d43c3c"/><rect x="11" y="6" width="1" height="1" fill="#d43c3c"/><rect x="9" y="8" width="1" height="1" fill="#d43c3c"/><rect x="11" y="8" width="1" height="1" fill="#d43c3c"/></svg>
<div class="t" style="left:620px;top:402px;color:#000">No</div>
<div class="a" style="left:914px;top:414px;width:18px;height:1px;background:#000"></div><div class="a" style="left:915px;top:399px;width:16px;height:15px;background:#efefef;border-left:1px solid #fff;border-top:1px solid #fff;box-shadow:inset -1px 0 0 #6a6a6a"></div>
<svg class="a" style="left:914px;top:399px" width="16" height="16"><path d="M5 7 H12 L8.5 11 Z" fill="#000"/></svg>
<div class="a" style="left:957px;top:399px;width:14px;height:15px;background:#fff"></div><div class="a" style="left:958px;top:402px;width:12px;height:11px;background:#fff;border:1px solid #b4b4b4;border-top-color:#787878;border-left-color:#787878"></div>
<div class="a" style="left:553px;top:127px;width:1px;height:288px;background:#c8c8c8"></div>
<div class="a" style="left:618px;top:127px;width:1px;height:288px;background:#c8c8c8"></div>
<div class="a" style="left:931px;top:127px;width:1px;height:288px;background:#c8c8c8"></div>
<div class="a" style="left:996px;top:127px;width:1px;height:288px;background:#c8c8c8"></div>
<div class="a" style="left:931px;top:191px;width:1px;height:16px;background:#000"></div><div class="a" style="left:931px;top:207px;width:1px;height:16px;background:#000"></div><div class="a" style="left:931px;top:223px;width:1px;height:16px;background:#000"></div><div class="a" style="left:931px;top:239px;width:1px;height:16px;background:#000"></div><div class="a" style="left:931px;top:287px;width:1px;height:16px;background:#000"></div><div class="a" style="left:931px;top:335px;width:1px;height:16px;background:#000"></div><div class="a" style="left:931px;top:351px;width:1px;height:16px;background:#000"></div><div class="a" style="left:931px;top:367px;width:1px;height:16px;background:#000"></div><div class="a" style="left:931px;top:383px;width:1px;height:16px;background:#000"></div><div class="a" style="left:931px;top:399px;width:1px;height:16px;background:#000"></div>
<svg class="a" style="left:368px;top:233px" width="56" height="26"><path d="M1 9 H32 V1 L55 13 L32 25 V17 H1 Z" fill="#ea0f78"/></svg>
<!-- desc box -->
<div class="a" style="left:431px;top:465px;width:593px;height:17px;background:#fff;border:1px solid #a0a0a0;border-right:none"></div>
<div class="t" style="left:437px;top:469px;letter-spacing:-0.1px">Are these accounts audited?</div>

<!-- bottom bar -->
<div class="a" style="left:242px;top:484px;width:782px;height:1px;background:#7b9db4"></div>
<div class="a" style="left:242px;top:485px;width:1px;height:34px;background:#a9c3d8"></div>
<div class="a btn" style="left:947px;top:491px;width:73px;height:25px"></div>
<div class="t" style="left:970px;top:498px"><span class="u">A</span>pply</div>

</body></html>
